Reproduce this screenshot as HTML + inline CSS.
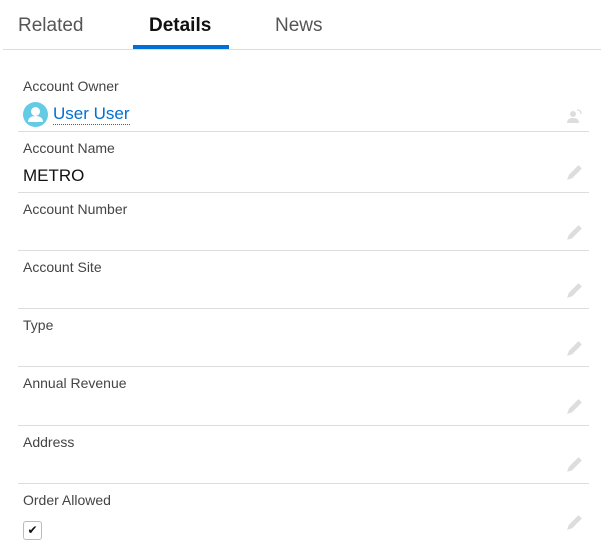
<!DOCTYPE html>
<html><head><style>
body{margin:0;width:601px;height:546px;background:#fff;font-family:"Liberation Sans",sans-serif;position:relative;overflow:hidden}
.a{position:absolute}
.tab{font-size:19px;color:#555;top:15px}
.lbl{font-size:14px;color:#444;left:23px}
.val{font-size:17px;color:#111;left:23px}
.hr{left:18px;width:571px;height:1px;background:#ddd}
.pen{left:565px;width:18px;height:18px}
</style></head><body>
<div class="a tab" style="left:18px">Related</div>
<div class="a tab" style="left:149px;color:#111;font-weight:bold">Details</div>
<div class="a tab" style="left:275px">News</div>
<div class="a" style="left:3px;top:49px;width:598px;height:1px;background:#ddd"></div>
<div class="a" style="left:133px;top:45px;width:96px;height:4px;background:#0070d2"></div>

<div class="a lbl" style="top:78px">Account Owner</div>
<div class="a" style="left:23px;top:102px;width:25px;height:25px;border-radius:50%;background:#65cae4;overflow:hidden">
<svg width="25" height="25" viewBox="0 0 25 25"><circle cx="12.5" cy="9.5" r="4.5" fill="#fff"/><path d="M5 20c0-4 3-6 7.5-6s7.5 2 7.5 6z" fill="#fff"/></svg></div>
<div class="a" style="left:53px;top:103px;font-size:17px;color:#0070d2;border-bottom:1px dotted #0070d2;line-height:21px">User User</div>
<svg class="a" style="left:566px;top:108px" width="18" height="16" viewBox="0 0 18 16"><circle cx="7" cy="6" r="3" fill="#ddd"/><path d="M1 15c0-4 3-5 6-5s6 1 6 5z" fill="#ddd"/><path d="M11 2c3 0 4 1 4 4" stroke="#ddd" stroke-width="1.3" fill="none"/></svg>
<div class="a hr" style="top:131px"></div>

<div class="a lbl" style="top:140px">Account Name</div>
<div class="a val" style="top:166px">METRO</div>
<div class="a hr" style="top:192px"></div>

<div class="a lbl" style="top:201px">Account Number</div>
<div class="a hr" style="top:250px"></div>
<div class="a lbl" style="top:259px">Account Site</div>
<div class="a hr" style="top:308px"></div>
<div class="a lbl" style="top:317px">Type</div>
<div class="a hr" style="top:366px"></div>
<div class="a lbl" style="top:375px">Annual Revenue</div>
<div class="a hr" style="top:425px"></div>
<div class="a lbl" style="top:434px">Address</div>
<div class="a hr" style="top:483px"></div>
<div class="a lbl" style="top:492px">Order Allowed</div>
<div class="a" style="left:23px;top:521px;width:19px;height:19px;border:1px solid #bbb;border-radius:3px;box-sizing:border-box;font-size:12px;line-height:17px;text-align:center;color:#111">✔</div>

<svg width="0" height="0" style="position:absolute"><defs><g id="p"><path d="M3 13l1-3 8-8 2 2-8 8z M3 13l3-1" fill="#ddd" stroke="#ddd" stroke-width="1.4"/></g></defs></svg>
<svg class="a pen" style="top:164px" viewBox="0 0 16 16"><use href="#p"/></svg>
<svg class="a pen" style="top:224px" viewBox="0 0 16 16"><use href="#p"/></svg>
<svg class="a pen" style="top:282px" viewBox="0 0 16 16"><use href="#p"/></svg>
<svg class="a pen" style="top:340px" viewBox="0 0 16 16"><use href="#p"/></svg>
<svg class="a pen" style="top:398px" viewBox="0 0 16 16"><use href="#p"/></svg>
<svg class="a pen" style="top:456px" viewBox="0 0 16 16"><use href="#p"/></svg>
<svg class="a pen" style="top:514px" viewBox="0 0 16 16"><use href="#p"/></svg>
</body></html>
